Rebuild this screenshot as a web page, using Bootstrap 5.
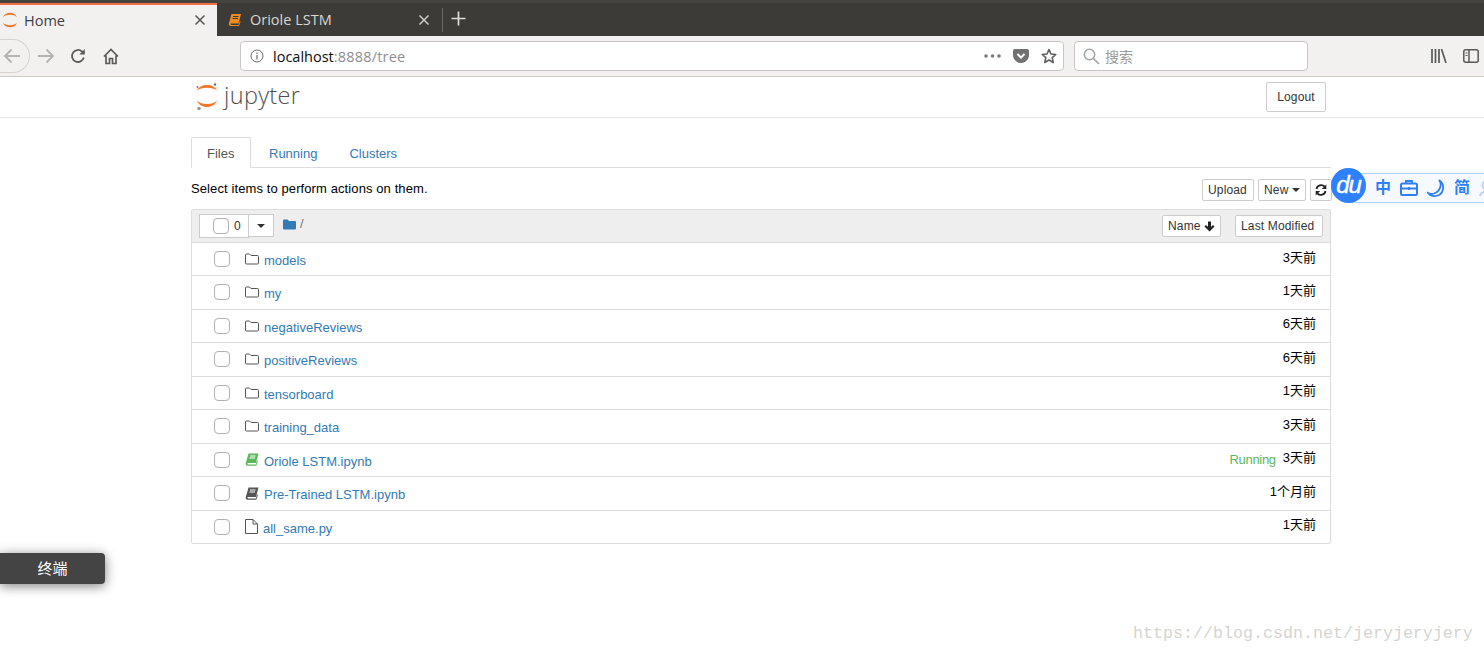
<!DOCTYPE html>
<html lang="zh">
<head>
<meta charset="utf-8">
<title>Home</title>
<link rel="stylesheet" href="https://cdn.jsdelivr.net/npm/bootstrap@5.3.0/dist/css/bootstrap.min.css">
<style>
html,body{height:654px;overflow:hidden;background:#fff;}
body{position:relative;font-family:"Liberation Sans","Noto Sans CJK SC",sans-serif;font-size:13px;color:#000;}
.ffx-tabs{height:36px;background:#3c3b37;position:relative;}
.ffx-tabs::before{content:"";position:absolute;left:0;right:0;top:0;height:3px;background:#45443f;}
.ffx-tab{width:217px;height:32px;margin-top:4px;padding:0 11px 0 2px;font:14.5px "Open Sans","Noto Sans",sans-serif;gap:6px;padding-bottom:1px;position:relative;}
.ffx-tab.on{background:#f2f1ef;border-top:2px solid #f07246;color:#3f3f46;margin-top:3px;height:33px;}
.ffx-tab.off{width:226px;padding-left:11px;padding-right:13px;background:#3c3b37;color:#d8d7d3;}
.ffx-x{margin-left:auto;flex:none;}
.ffx-plus{border-left:1px solid #6a6965;height:24px;margin-top:8px;margin-left:-1px;padding:0 8px;position:relative;}
.ffx-nav{height:41px;background:#f2f1ef;border-bottom:1px solid #cfccc8;position:relative;}
.ffx-back{width:31px;height:34px;border:1px solid #d6d4d1;border-left:0;border-radius:0 17px 17px 0;margin-right:7px;flex:none;margin-left:-1px;padding-left:4px;}
.ffx-ctl{width:33px;flex:none;}
.ffx-url{width:824px;height:30px;background:#fff;border:1px solid #c8c6c3;border-radius:4px;padding:0 6px 0 9px;margin-left:121px;font:14.5px "Open Sans","Noto Sans",sans-serif;color:#0c0c0d;flex:none;}
.ffx-url em{font-style:normal;color:#8e8e92;letter-spacing:.2px;}
.ffx-search{width:234px;height:30px;margin-left:10px;background:#fff;border:1px solid #c8c6c3;border-radius:4px;padding-left:8px;color:#9a9a9a;font:14px "Noto Sans CJK SC",sans-serif;gap:5px;flex:none;}
.jp-head{height:41px;border-bottom:1px solid #e7e7e7;padding:5px 0 0 195px;position:relative;}
.jp-logo{gap:5px;height:30px;}
.jp-word{font:300 23.500px/30px "Open Sans",sans-serif;color:#4e4e4e;letter-spacing:.35px;margin-top:-4px;}
.jp-btn{border:1px solid #ccc;background:#fff;color:#333;font-size:12px;line-height:18px;padding:1px 5px;border-radius:2px;display:inline-flex;align-items:center;white-space:nowrap;letter-spacing:.15px;text-decoration:none;}
.jp-logout{position:absolute;left:1266px;top:5px;height:30px;width:60px;padding:0;justify-content:center;}
.jp-wrap{width:1140px;margin-left:191px;padding-top:19px;}
.jp-tabs{height:31px;border-bottom:1px solid #ddd;padding:0;margin:0;}
.jp-tab{height:31px;padding:0 15px;line-height:31px;color:#337ab7;border:1px solid transparent;}
.jp-tab.on{color:#555;background:#fff;border-color:#ddd #ddd #fff;border-radius:2px 2px 0 0;padding:0 15px;width:60px;}
.jp-tabs .jp-tab:nth-child(2){padding:0 17px;}
.jp-tabs .jp-tab:nth-child(3){padding:0 13px;}
.jp-tool{height:41px;position:relative;}
.jp-tool p{margin:0;padding-top:13px;line-height:16px;letter-spacing:.1px;}
.jp-tool-btns{position:absolute;right:-1px;top:11px;gap:4px;}
.jp-tool-btns .jp-btn{height:22px;}
.jp-list{width:1140px;border:1px solid #ddd;border-radius:2px;}
.jp-list-head{height:33px;background:#eee;border-bottom:1px solid #ddd;position:relative;}
.jp-count{width:50px;height:24px;margin-left:7px;margin-top:4px;border:1px solid #ccc;background:#fff;padding-left:13px;gap:5px;font-size:12px;color:#333;flex:none;}
.jp-caret-btn{width:26px;height:23px;margin-top:4px;margin-left:-1px;border:1px solid #ccc;background:#fff;flex:none;justify-content:center;}
.jp-caret{width:0;height:0;border:4px solid transparent;border-top-color:#333;border-bottom:0;display:inline-block;}
.jp-crumb{margin-left:9px;gap:4px;color:#777;}
.jp-sort{position:absolute;top:5px;height:22px;}
.jp-row{height:33.5px;border-bottom:1px solid #ddd;position:relative;}
.jp-list-head + .jp-row{height:33px;}
.jp-row:last-child{border-bottom:0;height:32.5px;}
.jp-box{width:16px;height:16px;border:1px solid #b4b4b4;border-radius:4px;background:#fff;box-shadow:inset 0 0 1px #ddd;margin-left:22px;flex:none;}
.jp-count .jp-box{margin-left:0;}
.jp-ico{margin-left:15px;width:16px;flex:none;display:flex;}
.jp-name{color:#337ab7;margin-left:3px;padding-top:3px;text-decoration:none;white-space:nowrap;}
.jp-date{margin-left:auto;margin-right:14px;margin-top:-3px;line-height:16px;white-space:nowrap;}
.jp-run{color:#5cb85c;margin-left:auto;margin-right:7px;margin-top:-1px;letter-spacing:-.3px;}
.jp-run + .jp-date{margin-left:0;}
.du-bar{position:absolute;left:1331px;top:168px;width:153px;height:35px;overflow:hidden;}
.du-strip{position:absolute;left:18px;top:5px;width:160px;height:30px;background:#f6f9ff;border:1px solid #b5d0fb;border-right:0;padding-left:25px;gap:9px;color:#2f80f5;font-size:16px;font-weight:700;}
.du-strip svg,.du-strip span{flex:none;}
.du-disc{position:absolute;left:0;top:0;width:35px;height:35px;border-radius:50%;background:#2f80ff;color:#fff;font:italic 400 24px/33px "Liberation Sans",sans-serif;text-align:center;letter-spacing:-1px;-webkit-text-stroke:.4px #fff;}
.term-btn{position:absolute;left:0;top:553px;width:105px;height:31px;background:#444;border-radius:0 4px 4px 0;color:#fff;text-align:center;line-height:32px;font-size:15px;box-shadow:0 2px 12px rgba(0,0,0,.5);}
.wm{position:absolute;left:1133px;top:625px;font:16.670px/18px "Liberation Mono","DejaVu Sans Mono",monospace;color:#d5d5d0;white-space:nowrap;}
</style>
</head>
<body>
<div class="ffx-tabs d-flex align-items-start">
  <div class="ffx-tab on d-flex align-items-center">
    <svg width="16" height="16" viewBox="0 0 16 16"><path d="M1 5.300C3 -.8 13 -.8 15 5.300C12.500 2 3.500 2 1 5.300Z M1 10.700C3 16.800 13 16.800 15 10.700C12.500 14 3.500 14 1 10.700Z" fill="#f37726"/></svg>
    <span>Home</span>
    <svg class="ffx-x" width="12" height="12" viewBox="0 0 12 12"><path d="M1.500 1.500l9 9m0-9l-9 9" stroke="#555" stroke-width="1.500"/></svg>
  </div>
  <div class="ffx-tab off d-flex align-items-center" style="gap:8px">
    <svg width="14" height="14" viewBox="0 0 14 14"><path d="M3.500 1H13L10.500 10.500H2.800Q2.200 11.700 3.200 12H10.600L11.800 8L12.600 8.600L11 13H2.500Q.3 12.500 1 10Z" fill="#f28a1e"/><path d="M5 3.500h5.500M4.500 5.500h5.500" stroke="#3c3b37"/></svg>
    <span>Oriole LSTM</span>
    <svg class="ffx-x" width="12" height="12" viewBox="0 0 12 12"><path d="M1.500 1.500l9 9m0-9l-9 9" stroke="#cfcec9" stroke-width="1.500"/></svg>
  </div>
  <div class="ffx-plus"><svg width="15" height="24" viewBox="0 0 15 24"><path d="M7.500 3.500v14M.5 10.500h14" stroke="#dddcd8" stroke-width="1.700"/></svg></div>
</div>
<div class="ffx-nav d-flex align-items-center">
  <div class="ffx-back d-flex align-items-center"><svg width="18" height="16" viewBox="0 0 18 16"><path d="M17 8H2M8.500 1.500L2 8l6.500 6.500" fill="none" stroke="#b4b3b1" stroke-width="1.800"/></svg></div>
  <div class="ffx-ctl d-flex"><svg width="18" height="16" viewBox="0 0 18 16"><path d="M1 8h15M9.500 1.500L16 8l-6.500 6.500" fill="none" stroke="#b4b3b1" stroke-width="1.800"/></svg></div>
  <div class="ffx-ctl d-flex"><svg width="16" height="16" viewBox="0 0 16 16"><path d="M13.800 9.500A6 6 0 1 1 12 3.500L14 5.500" fill="none" stroke="#5b5b5b" stroke-width="1.800"/><path d="M14.800 1v5.500H9.300z" fill="#5b5b5b"/></svg></div>
  <div class="d-flex"><svg width="16" height="17" viewBox="0 0 16 17"><path d="M1 8.500L8 1.500l7 7M3 7.500V15.500h3.500V10.500h3V15.500H13V7.500" fill="none" stroke="#5b5b5b" stroke-width="1.700"/></svg></div>
  <div class="ffx-url d-flex align-items-center">
    <svg width="14" height="14" viewBox="0 0 14 14"><circle cx="7" cy="7" r="6" fill="none" stroke="#6b6b6b"/><path d="M7 6v4.500M7 3.500v1.500" stroke="#6b6b6b" stroke-width="1.200"/></svg>
    <span style="margin-left:9px">localhost<em>:8888/tree</em></span>
    <span class="ms-auto d-flex align-items-center gap-2">
      <svg width="17" height="4" viewBox="0 0 17 4"><circle cx="2" cy="2" r="1.800" fill="#7a7a7a"/><circle cx="8.500" cy="2" r="1.800" fill="#7a7a7a"/><circle cx="15" cy="2" r="1.800" fill="#7a7a7a"/></svg>
      <svg class="ms-1" width="16" height="14" viewBox="0 0 16 14"><path d="M2 0H14Q16 0 16 2V6C16 10.500 12 14 8 14S0 10.500 0 6V2Q0 0 2 0Z" fill="#717171"/><path d="M4.500 5L8 8.500 11.500 5" fill="none" stroke="#fff" stroke-width="2"/></svg>
      <svg class="ms-1" width="16" height="16" viewBox="0 0 16 16"><path d="M8 1.500l2 4.500 4.800.500-3.600 3.200 1 4.800L8 12l-4.200 2.500 1-4.800L1.200 6.500 6 6z" fill="none" stroke="#5e5e5e" stroke-width="1.600" stroke-linejoin="round"/></svg>
    </span>
  </div>
  <div class="ffx-search d-flex align-items-center">
    <svg width="17" height="17" viewBox="0 0 17 17"><circle cx="6.500" cy="6.500" r="5.200" fill="none" stroke="#a5a5a5" stroke-width="1.500"/><path d="M10.500 10.500L16 16" stroke="#a5a5a5" stroke-width="1.700"/></svg>
    <span>搜索</span>
  </div>
  <div class="d-flex ms-auto align-items-center" style="gap:16px;padding-right:5px">
    <svg width="16" height="14" viewBox="0 0 16 14"><path d="M1 0v14M4.500 0v14M8 0v14M10.500 0L15 14" fill="none" stroke="#5a5a5a" stroke-width="1.700"/></svg>
    <svg width="16" height="14" viewBox="0 0 16 14"><rect x=".8" y=".8" width="14.400" height="12.400" rx="2" fill="none" stroke="#5a5a5a" stroke-width="1.500"/><path d="M6 1v12" stroke="#5a5a5a" stroke-width="1.500"/><path d="M2.500 4h2M2.500 6.500h2" stroke="#5a5a5a"/></svg>
  </div>
</div>

<div class="jp-head">
  <div class="jp-logo d-flex align-items-center">
    <svg width="24" height="30" viewBox="0 0 24 30"><path d="M2 8.500C5 1.200 19 1.200 22 8.500C18 4.900 6 4.900 2 8.500Z M2 18.500C5 27.200 19 27.200 22 18.500C18 23.200 6 23.200 2 18.500Z" fill="#f37726"/><circle cx="20" cy="2.500" r="1.300" fill="#767677"/><circle cx="2.500" cy="5" r="1" fill="#767677"/><circle cx="4" cy="26.500" r="1.800" fill="#989798"/></svg>
    <span class="jp-word">jupyter</span>
  </div>
  <a class="jp-btn jp-logout">Logout</a>
</div>

<div class="jp-wrap">
  <ul class="jp-tabs d-flex list-unstyled">
    <li class="jp-tab on">Files</li>
    <li class="jp-tab">Running</li>
    <li class="jp-tab">Clusters</li>
  </ul>
  <div class="jp-tool">
    <p>Select items to perform actions on them.</p>
    <div class="jp-tool-btns d-flex">
      <span class="jp-btn" style="width:52px">Upload</span>
      <span class="jp-btn" style="gap:4px;width:48px">New <span class="jp-caret"></span></span>
      <span class="jp-btn" style="width:22px;justify-content:center;padding:0">
        <svg width="12" height="12" viewBox="0 0 12 12"><path d="M1.500 5A4.700 4.700 0 0 1 9.500 2.500" fill="none" stroke="#222" stroke-width="1.800"/><path d="M11.300 .5V5H6.800z" fill="#222"/><path d="M10.500 7A4.700 4.700 0 0 1 2.500 9.500" fill="none" stroke="#222" stroke-width="1.800"/><path d="M.7 11.500V7H5.200z" fill="#222"/></svg>
      </span>
    </div>
  </div>
  <div class="jp-list">
    <div class="jp-list-head d-flex align-items-start">
      <div class="jp-count d-flex align-items-center"><span class="jp-box"></span><span>0</span></div>
      <div class="jp-caret-btn d-flex align-items-center"><span class="jp-caret"></span></div>
      <div class="jp-crumb d-flex align-items-center" style="height:28px">
        <svg width="13" height="11" viewBox="0 0 13 11"><path d="M0 1.500Q0 .5 1 .5H4.500L6 2H12Q13 2 13 3V9.500Q13 10.500 12 10.500H1Q0 10.500 0 9.500Z" fill="#337ab7"/></svg>
        <span>/</span>
      </div>
      <span class="jp-btn jp-sort" style="left:970px;gap:3px;width:59px">Name <svg width="11" height="11" viewBox="0 0 11 11"><path d="M5.500 10.500L.5 5.500 2 4l2 2V.5h3V6l2-2 1.500 1.500z" fill="#222"/></svg></span>
      <span class="jp-btn jp-sort" style="left:1043px;width:88px">Last Modified</span>
    </div>
    <div class="jp-row d-flex align-items-center"><span class="jp-box"></span><span class="jp-ico"><svg width="14" height="12" viewBox="0 0 14 12"><path d="M.5 2Q.5 1 1.500 1H4.500L6 2.500H12.500Q13.500 2.500 13.500 3.500V10Q13.500 11 12.500 11H1.500Q.5 11 .5 10Z" fill="none" stroke="#555"/></svg></span><a class="jp-name">models</a><span class="jp-date">3天前</span></div>
    <div class="jp-row d-flex align-items-center"><span class="jp-box"></span><span class="jp-ico"><svg width="14" height="12" viewBox="0 0 14 12"><path d="M.5 2Q.5 1 1.500 1H4.500L6 2.500H12.500Q13.500 2.500 13.500 3.500V10Q13.500 11 12.500 11H1.500Q.5 11 .5 10Z" fill="none" stroke="#555"/></svg></span><a class="jp-name">my</a><span class="jp-date">1天前</span></div>
    <div class="jp-row d-flex align-items-center"><span class="jp-box"></span><span class="jp-ico"><svg width="14" height="12" viewBox="0 0 14 12"><path d="M.5 2Q.5 1 1.500 1H4.500L6 2.500H12.500Q13.500 2.500 13.500 3.500V10Q13.500 11 12.500 11H1.500Q.5 11 .5 10Z" fill="none" stroke="#555"/></svg></span><a class="jp-name">negativeReviews</a><span class="jp-date">6天前</span></div>
    <div class="jp-row d-flex align-items-center"><span class="jp-box"></span><span class="jp-ico"><svg width="14" height="12" viewBox="0 0 14 12"><path d="M.5 2Q.5 1 1.500 1H4.500L6 2.500H12.500Q13.500 2.500 13.500 3.500V10Q13.500 11 12.500 11H1.500Q.5 11 .5 10Z" fill="none" stroke="#555"/></svg></span><a class="jp-name">positiveReviews</a><span class="jp-date">6天前</span></div>
    <div class="jp-row d-flex align-items-center"><span class="jp-box"></span><span class="jp-ico"><svg width="14" height="12" viewBox="0 0 14 12"><path d="M.5 2Q.5 1 1.500 1H4.500L6 2.500H12.500Q13.500 2.500 13.500 3.500V10Q13.500 11 12.500 11H1.500Q.5 11 .5 10Z" fill="none" stroke="#555"/></svg></span><a class="jp-name">tensorboard</a><span class="jp-date">1天前</span></div>
    <div class="jp-row d-flex align-items-center"><span class="jp-box"></span><span class="jp-ico"><svg width="14" height="12" viewBox="0 0 14 12"><path d="M.5 2Q.5 1 1.500 1H4.500L6 2.500H12.500Q13.500 2.500 13.500 3.500V10Q13.500 11 12.500 11H1.500Q.5 11 .5 10Z" fill="none" stroke="#555"/></svg></span><a class="jp-name">training_data</a><span class="jp-date">3天前</span></div>
    <div class="jp-row d-flex align-items-center"><span class="jp-box"></span><span class="jp-ico"><svg width="14" height="13" viewBox="0 0 14 13"><path d="M3.500 .5H13.500L11 10H2.800Q2 11 3 11.500H10.800L12.200 7.500L13 8L11.300 12.800H2.300Q.2 12.300 .8 10Z" fill="#5cb85c"/><path d="M5 3h5.500M4.500 5h5.500" stroke="#fff"/></svg></span><a class="jp-name">Oriole LSTM.ipynb</a><span class="jp-run">Running</span><span class="jp-date">3天前</span></div>
    <div class="jp-row d-flex align-items-center"><span class="jp-box"></span><span class="jp-ico"><svg width="14" height="13" viewBox="0 0 14 13"><path d="M3.500 .5H13.500L11 10H2.800Q2 11 3 11.500H10.800L12.200 7.500L13 8L11.300 12.800H2.300Q.2 12.300 .8 10Z" fill="#555"/><path d="M5 3h5.500M4.500 5h5.500" stroke="#fff"/></svg></span><a class="jp-name">Pre-Trained LSTM.ipynb</a><span class="jp-date">1个月前</span></div>
    <div class="jp-row d-flex align-items-center"><span class="jp-box"></span><span class="jp-ico"><svg width="13" height="15" viewBox="0 0 13 15"><path d="M.5 .5H8L12.500 5V14.500H.5ZM8 .5V5H12.500" fill="none" stroke="#555"/></svg></span><a class="jp-name" style="margin-left:2px">all_same.py</a><span class="jp-date">1天前</span></div>
  </div>
</div>

<div class="du-bar">
  <div class="du-strip d-flex align-items-center">
    <span>中</span>
    <svg width="18" height="16" viewBox="0 0 18 16"><rect x="1" y="3.500" width="16" height="11.500" rx="1.500" fill="none" stroke="#2f80f5" stroke-width="2"/><path d="M6 3.500V1h6v2.500M1 8.500h16M9 7v3" fill="none" stroke="#2f80f5" stroke-width="1.800"/></svg>
    <svg width="18" height="18" viewBox="0 0 18 18"><path d="M12 1C15 5 14 12 7 14.500C5 15 3 15 1 14C3 17 8 18 12 16C17 13 18 5 12 1Z" fill="none" stroke="#2f80f5" stroke-width="1.800"/></svg>
    <span>简</span>
    <svg width="16" height="18" viewBox="0 0 16 18"><circle cx="8" cy="6" r="4.500" fill="none" stroke="#b5d0fb" stroke-width="1.800"/><path d="M1 17C2 11 14 11 15 17" fill="none" stroke="#b5d0fb" stroke-width="1.800"/></svg>
  </div>
  <div class="du-disc">du</div>
</div>
<div class="term-btn">终端</div>
<div class="wm">https://blog.csdn.net/jeryjeryjery</div>
</body>
</html>
